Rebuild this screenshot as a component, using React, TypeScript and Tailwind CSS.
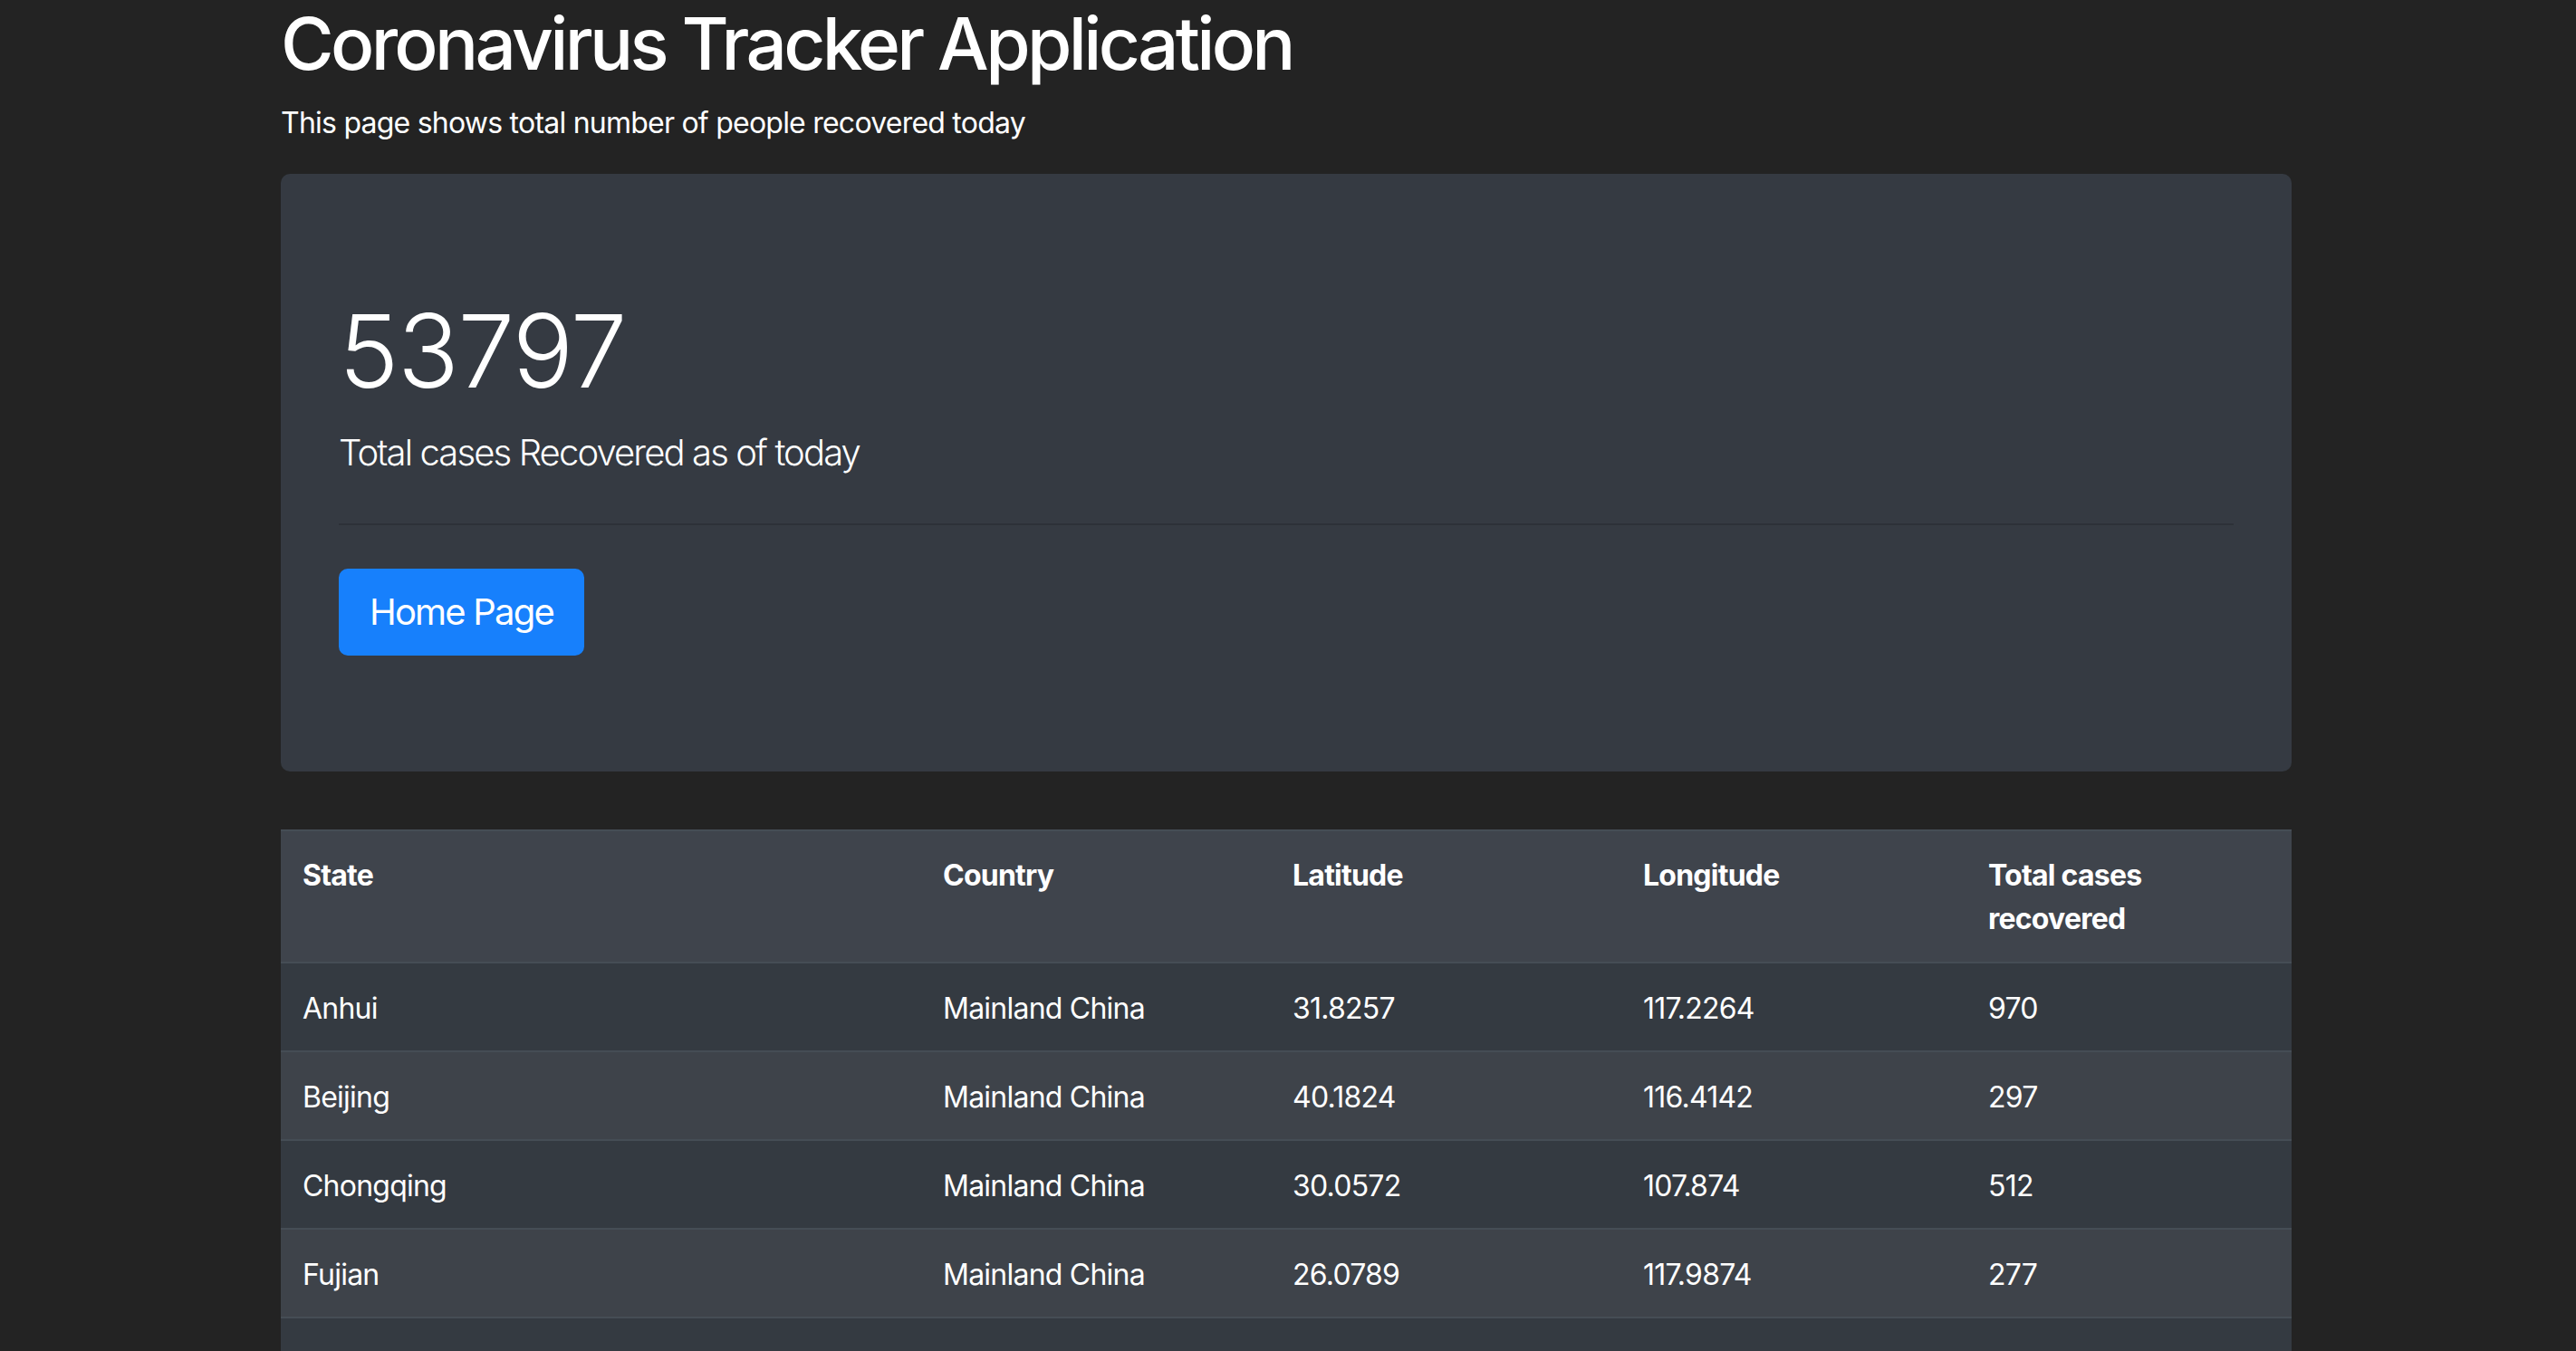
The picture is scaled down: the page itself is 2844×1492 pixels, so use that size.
const rows = [
  { state: "Anhui", country: "Mainland China", lat: "31.8257", lng: "117.2264", total: "970" },
  { state: "Beijing", country: "Mainland China", lat: "40.1824", lng: "116.4142", total: "297" },
  { state: "Chongqing", country: "Mainland China", lat: "30.0572", lng: "107.874", total: "512" },
  { state: "Fujian", country: "Mainland China", lat: "26.0789", lng: "117.9874", total: "277" },
  { state: "Gansu", country: "Mainland China", lat: "36.0611", lng: "103.8343", total: "87" },
  { state: "Guangdong", country: "Mainland China", lat: "23.3417", lng: "113.4244", total: "1181" },
  { state: "Guangxi", country: "Mainland China", lat: "23.8298", lng: "108.7881", total: "215" },
];

export default function App() {
  return (
    <div className="min-h-screen bg-[#232323] text-white font-['Inter',sans-serif]">
      <div className="ml-[310px] w-[2220px] pb-[64px]">
        <h1 className="text-[80px] leading-[96px] font-medium tracking-[-0.046em] mb-[16px]">
          Coronavirus Tracker Application
        </h1>
        <p className="text-[32px] leading-[48px] tracking-[-0.024em] mb-[32px]">
          This page shows total number of people recovered today
        </p>

        {/* jumbotron */}
        <div className="bg-[#353a42] rounded-[10px] px-[64px] py-[128px] mb-[64px]">
          <h1 className="text-[112px] leading-[134px] font-light tracking-[-0.012em] mb-[16px]">53797</h1>
          <p className="text-[40px] leading-[60px] font-light tracking-[-0.047em]">Total cases Recovered as of today</p>
          <hr className="my-[48px] border-0 border-t-2 border-black/15" />
          <a
            href="#"
            className="inline-block px-[32px] py-[16px] text-[40px] leading-[60px] tracking-[-0.045em] rounded-[10px] bg-[#1780fc] border-2 border-[#1780fc] text-white"
          >
            Home Page
          </a>
        </div>

        <table className="w-full table-fixed border-collapse text-[32px] leading-[48px] tracking-[-0.024em]">
          <colgroup>
            <col className="w-[707px]" />
            <col className="w-[386px]" />
            <col className="w-[387px]" />
            <col className="w-[381px]" />
            <col className="w-[359px]" />
          </colgroup>
          <thead>
            <tr className="bg-[#3f444c]">
              {["State", "Country", "Latitude", "Longitude", "Total cases recovered"].map((h) => (
                <th
                  key={h}
                  className="px-[24px] pt-[25px] pb-[23px] text-left align-top font-bold border-t-2 border-b-2 border-[#454d55]"
                >
                  {h}
                </th>
              ))}
            </tr>
          </thead>
          <tbody>
            {rows.map((r, i) => (
              <tr key={r.state} className={i % 2 === 0 ? "bg-[#343a41]" : "bg-[#3e434a]"}>
                <td className="px-[24px] pt-[26px] pb-[22px] border-t-2 border-[#454d55]">{r.state}</td>
                <td className="px-[24px] pt-[26px] pb-[22px] border-t-2 border-[#454d55]">{r.country}</td>
                <td className="px-[24px] pt-[26px] pb-[22px] border-t-2 border-[#454d55]">{r.lat}</td>
                <td className="px-[24px] pt-[26px] pb-[22px] border-t-2 border-[#454d55]">{r.lng}</td>
                <td className="px-[24px] pt-[26px] pb-[22px] border-t-2 border-[#454d55]">{r.total}</td>
              </tr>
            ))}
          </tbody>
        </table>
      </div>
    </div>
  );
}
